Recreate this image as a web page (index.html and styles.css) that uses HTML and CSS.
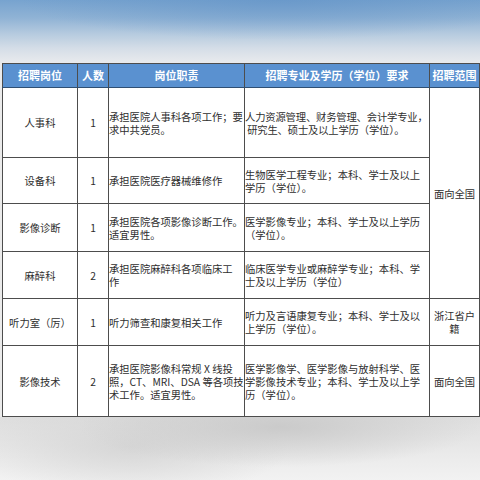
FILE: index.html
```html
<!DOCTYPE html>
<html lang="zh">
<head>
<meta charset="utf-8">
<link rel="stylesheet" href="styles.css">
</head>
<body>
<div class="page">
  <div class="sky"></div>
  <div class="sheet">
    <table class="jobs">
      <colgroup>
        <col class="c1"><col class="c2"><col class="c3"><col class="c4"><col class="c5">
      </colgroup>
      <thead>
        <tr class="head">
          <th>招聘岗位</th><th>人数</th><th>岗位职责</th><th>招聘专业及学历（学位）要求</th><th>招聘范围</th>
        </tr>
      </thead>
      <tbody>
        <tr class="r1">
          <td class="ctr">人事科</td><td class="ctr">1</td>
          <td class="txt">承担医院人事科各项工作；要<br>求中共党员。</td>
          <td class="txt wide">人力资源管理、财务管理、会计学专业，<br>&nbsp;研究生、硕士及以上学历（学位）。</td>
          <td class="ctr" rowspan="4">面向全国</td>
        </tr>
        <tr class="r2">
          <td class="ctr">设备科</td><td class="ctr">1</td>
          <td class="txt">承担医院医疗器械维修作</td>
          <td class="txt">生物医学工程专业；本科、学士及以上<br>学历（学位）。</td>
        </tr>
        <tr class="r3">
          <td class="ctr">影像诊断</td><td class="ctr">1</td>
          <td class="txt">承担医院各项影像诊断工作。<br>适宜男性。</td>
          <td class="txt">医学影像专业；本科、学士及以上学历<br>（学位）。</td>
        </tr>
        <tr class="r4">
          <td class="ctr">麻醉科</td><td class="ctr">2</td>
          <td class="txt">承担医院麻醉科各项临床工<br>作</td>
          <td class="txt">临床医学专业或麻醉学专业；本科、学<br>士及以上学历（学位）</td>
        </tr>
        <tr class="r5">
          <td class="ctr">听力室（厉）</td><td class="ctr">1</td>
          <td class="txt">听力筛查和康复相关工作</td>
          <td class="txt">听力及言语康复专业；本科、学士及以<br>上学历（学位）。</td>
          <td class="ctr">浙江省户<br>籍</td>
        </tr>
        <tr class="r6">
          <td class="ctr">影像技术</td><td class="ctr">2</td>
          <td class="txt">承担医院影像科常规 X 线投<br>照，CT、MRI、DSA 等各项技<br>术工作。适宜男性。</td>
          <td class="txt">医学影像学、医学影像与放射科学、医<br>学影像技术专业；本科、学士及以上学<br>历（学位）。</td>
          <td class="ctr">面向全国</td>
        </tr>
      </tbody>
    </table>
  </div>
  <div class="floor"></div>
</div>
</body>
</html>
```
FILE: styles.css
```css
html, body {
  margin: 0;
  padding: 0;
}
body {
  width: 480px;
  height: 480px;
  overflow: hidden;
  font-family: "Noto Sans CJK SC", "Liberation Serif", sans-serif;
}
.page {
  width: 480px;
  height: 480px;
  display: flex;
  flex-direction: column;
  background: #ececec;
}
.sky {
  height: 63px;
  flex: none;
  background:
    radial-gradient(ellipse 260px 40px at 280px 0px, rgba(96,145,198,0.55), rgba(96,145,198,0) 100%),
    linear-gradient(to bottom, #77a3cf 0px, #90b3d5 18px, #b6cbdf 34px, #d4dde7 48px, #e5e8ec 60px, #e9eaec 63px);
}
.sheet {
  flex: none;
  padding-left: 2px;
  background: #ebebeb;
}
.jobs {
  width: 477px;
  table-layout: fixed;
  border-collapse: collapse;
  background: #ffffff;
  color: #2e2e2e;
  font-size: 10.3px;
  line-height: 13px;
}
.c1 { width: 75px; }
.c2 { width: 31px; }
.c3 { width: 136px; }
.c4 { width: 185px; }
.c5 { width: 50px; }
.jobs th, .jobs td {
  border: 1px solid #4d4d4d;
  padding: 0;
  overflow: hidden;
  white-space: nowrap;
  vertical-align: middle;
}
.jobs th {
  background: #5a91d0;
  color: #ffffff;
  font-size: 11px;
  font-weight: bold;
  height: 23px;
  text-align: center;
  border-bottom: 1px solid #2f4f73;
}
.ctr {
  text-align: center;
}
.txt {
  text-align: left;
}
.wide {
  letter-spacing: -0.15px;
}
.r1 td { height: 69px; }
.r2 td { height: 45px; }
.r3 td { height: 47px; }
.r4 td { height: 46px; }
.r5 td { height: 46px; }
.r6 td { height: 70px; }
.floor {
  flex: 1;
  background:
    radial-gradient(ellipse 200px 40px at 280px 10px, rgba(200,200,200,0.9), rgba(200,200,200,0) 100%),
    radial-gradient(ellipse 160px 50px at 130px 30px, rgba(210,210,210,0.8), rgba(210,210,210,0) 100%),
    linear-gradient(to bottom, #dedede 0px, #ebebeb 40px, #f2f2f2 64px);
}
```
